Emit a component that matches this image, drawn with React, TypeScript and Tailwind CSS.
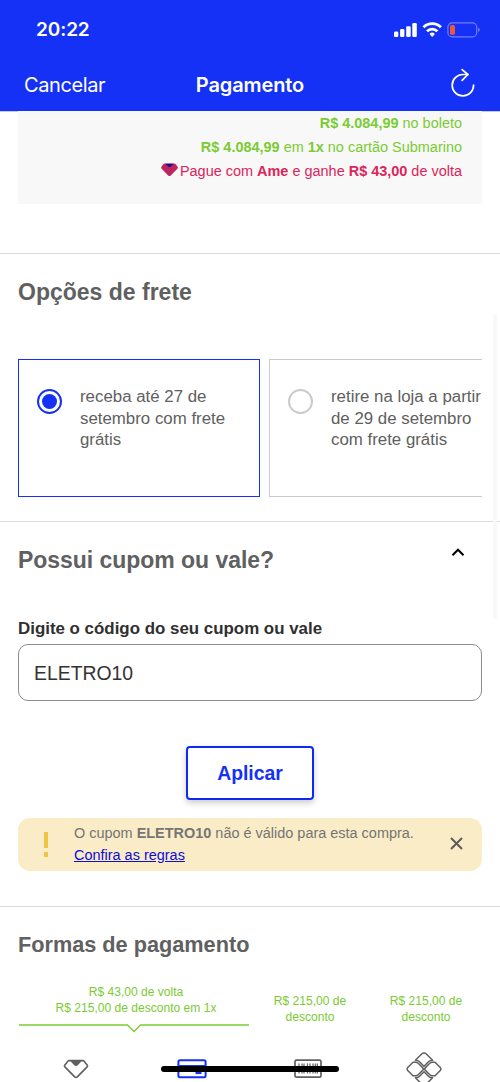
import React, { useState } from "react";

// Barra de status do aparelho
const StatusBar = () => (
    <div className="flex h-[59px] items-center justify-between pl-9 pr-[20px] pt-[2px]">
        <span className="font-['Inter'] text-[19px] font-semibold tracking-[-0.1px]">20:22</span>
        <svg width="86" height="18" viewBox="0 0 86 18" className="mb-[1px]" fill="white">
            <rect x="0" y="10.5" width="4.3" height="5.5" rx="1.2" />
            <rect x="6.1" y="8" width="4.3" height="8" rx="1.2" />
            <rect x="12.2" y="5.2" width="4.5" height="10.8" rx="1.2" />
            <rect x="18.3" y="2" width="4.5" height="14" rx="1.2" />
            <g fill="none" stroke="white" strokeWidth="2.8">
                <path d="M29.5 6.2a12.2 12.2 0 0 1 17.4 0" />
                <path d="M33 10.2a7.4 7.4 0 0 1 10.4 0" />
            </g>
            <path d="M35.5 12.9a3.9 3.9 0 0 1 5.4 0L38.2 15.9z" />
            <rect x="53.9" y="1.9" width="28.8" height="14" rx="4.2" fill="none" stroke="#717ff9" strokeWidth="1.2" />
            <rect x="56" y="4" width="5" height="9.8" rx="1.6" fill="#f0553f" />
            <path d="M84.3 6.8c1.8.5 1.8 3.6 0 4.1z" fill="#8390fa" />
        </svg>
    </div>
);

const ReloadIcon = () => (
    <svg width="26" height="30" viewBox="0 0 26 30" fill="none" stroke="white" strokeWidth="1.7" strokeLinecap="round" strokeLinejoin="round">
        <path d="M23.6 17a10.7 10.7 0 1 1-10.7-10.5h5" />
        <path d="M12.1 1.6l5.800 4.900-5.800 5.900" />
    </svg>
);

const AmeIcon = () => (
    <svg width="26" height="20" viewBox="0 0 26 20" fill="none" stroke="#606060" strokeWidth="1.6" strokeLinejoin="round">
        <path d="M6.3 1.6h13.4q.8 0 1.4.7l3 3.7q.8 1 0 1.9l-9.8 10q-1.3 1.1-2.6 0L1.9 7.9q-.8-.9 0-1.9l3-3.7q.6-.7 1.4-.7z" />
        <path d="M7 1.6h12l-4.2 4.7q-1.8 1.4-3.6 0z" fill="#606060" stroke="none" />
    </svg>
);

const CardIcon = () => (
    <svg width="30" height="20" viewBox="0 0 30 20" fill="none" stroke="#1431f5" strokeWidth="2">
        <rect x="1.4" y="1.2" width="27.2" height="17" rx="1.5" />
        <path d="M1.4 7h27.2" />
        <path d="M18.5 13.8h6" strokeWidth="2.6" />
    </svg>
);

const BarcodeIcon = () => (
    <svg width="30" height="20" viewBox="0 0 30 20" fill="none" stroke="#606060" strokeWidth="1.7">
        <rect x="2" y="1.2" width="26" height="17" rx="1.5" />
        <path d="M6 4.5v10M9 4.5v10M11 4.5v10M14.5 4.5v10M17 4.5v10M20 4.5v10M22.3 4.5v10M24.3 4.5v10" strokeWidth="1.2" />
    </svg>
);

const PixIcon = () => (
    <svg width="36" height="36" viewBox="0 0 36 36" fill="none" stroke="#606060" strokeWidth="1.5" strokeLinejoin="round">
        <path d="M9.4 9.2l6-6q2.6-2.4 5.2 0l6 6q-2.6 0-3.9 1.3L18 15.2l-4.7-4.7Q12 9.200 9.4 9.2z" />
        <path d="M9.4 26.8l6 6q2.6 2.4 5.2 0l6-6q-2.6 0-3.9-1.3L18 20.8l-4.7 4.7q-1.3 1.3-3.9 1.3z" />
        <path d="M7 11.2h2.8q1.4 0 2.4 1l4.4 4.4q1.4 1.4 0 2.8l-4.4 4.4q-1 1-2.4 1H7l-5-5q-1.8-1.8 0-3.600z" />
        <path d="M29 11.2h-2.8q-1.4 0-2.4 1l-4.4 4.4q-1.4 1.4 0 2.8l4.4 4.4q1 1 2.4 1H29l5-5q1.8-1.8 0-3.600z" />
    </svg>
);

const OPTIONS = ["receba até 27 de setembro com frete grátis", "retire na loja a partir de 29 de setembro com frete grátis"];

const App = () => {
    const [selected, setSelected] = useState<number>(0); // opção de frete
    const [coupon, setCoupon] = useState<string>("ELETRO10");

    return (
        <div className="relative flex h-[1082px] w-[500px] flex-col overflow-hidden bg-white font-['Liberation_Sans',sans-serif] text-[#606060]">
            {/* Cabeçalho */}
            <header className="h-[111px] shrink-0 bg-[#1431f5] text-white">
                <StatusBar />
                <div className="grid h-[50px] grid-cols-3 items-center pl-6 pr-[24px] pt-px font-['Inter']">
                    <button className="text-left text-[20px] tracking-[-0.4px]">Cancelar</button>
                    <h1 className="text-center text-[20px] font-semibold tracking-[-0.1px]">Pagamento</h1>
                    <button className="mb-[3px] justify-self-end" aria-label="Recarregar">
                        <ReloadIcon />
                    </button>
                </div>
            </header>

            {/* Resumo de valores */}
            <section className="h-[143px] shrink-0 border-b border-t border-b-[#dcdcdc] border-t-[#c5c9e8] px-[18px]">
                <div className="h-[93px] bg-[#f8f8f8] pr-5 text-right text-[14.46px] leading-6 text-[#7bcb32]">
                    <p className="-mt-px"><b>R$ 4.084,99</b> no boleto</p>
                    <p><b>R$ 4.084,99</b> em <b>1x</b> no cartão Submarino</p>
                    <p className="flex items-center justify-end gap-[2px] text-[#dc2459]">
                        <svg width="17" height="14" viewBox="0 0 17 14" className="mb-[3px] shrink-0">
                            <path d="M3.8.5h9.4q.8 0 1.3.6l2.1 2.7q.6.9 0 1.7l-6.8 7q-1.3 1-2.6 0L.4 5.5q-.6-.8 0-1.7l2.1-2.7Q3 .5 3.8.5z" fill="#bd2560" />
                            <path d="M4.3.7h8.4L10 3.5q-1.500 1-3 0z" fill="#1c1480" />
                        </svg>
                        <span>Pague com <b>Ame</b> e ganhe <b>R$ 43,00</b> de volta</span>
                    </p>
                </div>
            </section>

            {/* Frete */}
            <section className="h-[268px] shrink-0 border-b border-[#dcdcdc] px-[18px] pt-[25px]">
                <h2 className="text-[23px] font-bold leading-[27px]">Opções de frete</h2>
                <div className="mt-[53px] flex gap-[9px] overflow-hidden">
                    {OPTIONS.map((option, index) => (
                        <button
                            key={index}
                            onClick={() => setSelected(index)}
                            className={`flex h-[138px] w-[242px] shrink-0 items-start gap-[18px] border pl-[18px] pt-[26px] text-left ${
                                selected === index ? "border-[#1431f5]" : "border-[#cacaca]"
                            }`}
                        >
                            <span
                                className={`mt-[3px] flex size-[25px] shrink-0 items-center justify-center rounded-full border-2 ${
                                    selected === index ? "border-[#1431f5]" : "border-[#cacaca]"
                                }`}
                            >
                                {selected === index && <span className="size-[15px] rounded-full bg-[#1431f5]" />}
                            </span>
                            <span className="w-[155px] text-[16.85px] leading-[21.7px]">{option}</span>
                        </button>
                    ))}
                </div>
            </section>

            {/* Cupom */}
            <section className="flex h-[385px] shrink-0 flex-col border-b border-[#dcdcdc] px-[18px] pt-[25px]">
                <div className="flex items-start justify-between pr-[17px]">
                    <h2 className="text-[23px] font-bold leading-[27px] tracking-[-0.04px]">Possui cupom ou vale?</h2>
                    <svg width="14" height="10" viewBox="0 0 14 10" fill="none" stroke="black" strokeWidth="2">
                        <path d="M1.5 8.2L7 2.7l5.5 5.5" />
                    </svg>
                </div>
                <label className="mt-[45px] text-[16.9px] font-bold leading-5 text-[#303030]">Digite o código do seu cupom ou vale</label>
                <input
                    value={coupon}
                    onChange={(e) => setCoupon(e.target.value)}
                    className="mt-[5px] h-[57px] shrink-0 rounded-[10px] border border-[#8c8c8c] px-[15px] pt-[2px] text-[19.4px] text-[#333]"
                />
                <button className="mt-[45px] h-[54px] w-[128px] shrink-0 self-center rounded-[4px] border-2 border-[#0d2af5] pt-px text-[19.4px] font-bold text-[#1431f5] shadow-[0_3px_6px_rgba(0,0,0,0.2)]">
                    Aplicar
                </button>
                <div className="mt-[18px] flex h-[53px] shrink-0 items-center rounded-[12px] bg-[#f9ecc6] pl-[26px] pr-[19px]">
                    <svg width="4" height="25" viewBox="0 0 4 25" fill="#ecc546">
                        <rect width="4" height="16" />
                        <rect y="20" width="4" height="5" />
                    </svg>
                    <div className="ml-[26px] flex-1 text-[14.46px] leading-[21.5px] text-[#757575]">
                        <p>O cupom <b>ELETRO10</b> não é válido para esta compra.</p>
                        <a className="text-[#0d0ddb] underline">Confira as regras</a>
                    </div>
                    <svg width="13" height="13" viewBox="0 0 13 13" className="mb-[3px]" fill="none" stroke="#5c5c5c" strokeWidth="2">
                        <path d="M1 1l11 11M12 1L1 12" />
                    </svg>
                </div>
            </section>

            {/* Pagamento */}
            <section className="pl-[18px] pt-[24px]">
                <h2 className="text-[21.7px] font-bold leading-[27px]">Formas de pagamento</h2>
                <div className="ml-[2px] mt-[26px] flex h-[40px] items-center text-center text-[12.07px] leading-4 text-[#7bcb32]">
                    <p className="mb-[8px] w-[232px]">R$ 43,00 de volta<br />R$ 215,00 de desconto em 1x</p>
                    <p className="mt-[10px] w-[116px] px-4">R$ 215,00 de desconto</p>
                    <p className="mt-[10px] w-[116px] px-4">R$ 215,00 de desconto</p>
                </div>
                <svg width="232" height="9" viewBox="0 0 232 9" fill="none" stroke="#7bcb32" strokeWidth="1.3">
                    <path d="M1 1h108.5l6.5 6.5L122.5 1H231" />
                </svg>
                <div className="mt-[17px] flex h-[38px] items-center">
                    <div className="flex w-[116px] justify-center"><AmeIcon /></div>
                    <div className="flex w-[116px] justify-center"><CardIcon /></div>
                    <div className="flex w-[116px] justify-center"><BarcodeIcon /></div>
                    <div className="flex w-[116px] justify-center"><PixIcon /></div>
                </div>
            </section>

            {/* Barra de rolagem e indicador do sistema */}
            <div className="absolute left-[493px] top-[315px] h-[304px] w-[4px] bg-[#f8f8f8]" />
            <div className="absolute left-[161px] top-[1066px] h-[6px] w-[178px] rounded-full bg-black" />
        </div>
    );
};

export default App;
